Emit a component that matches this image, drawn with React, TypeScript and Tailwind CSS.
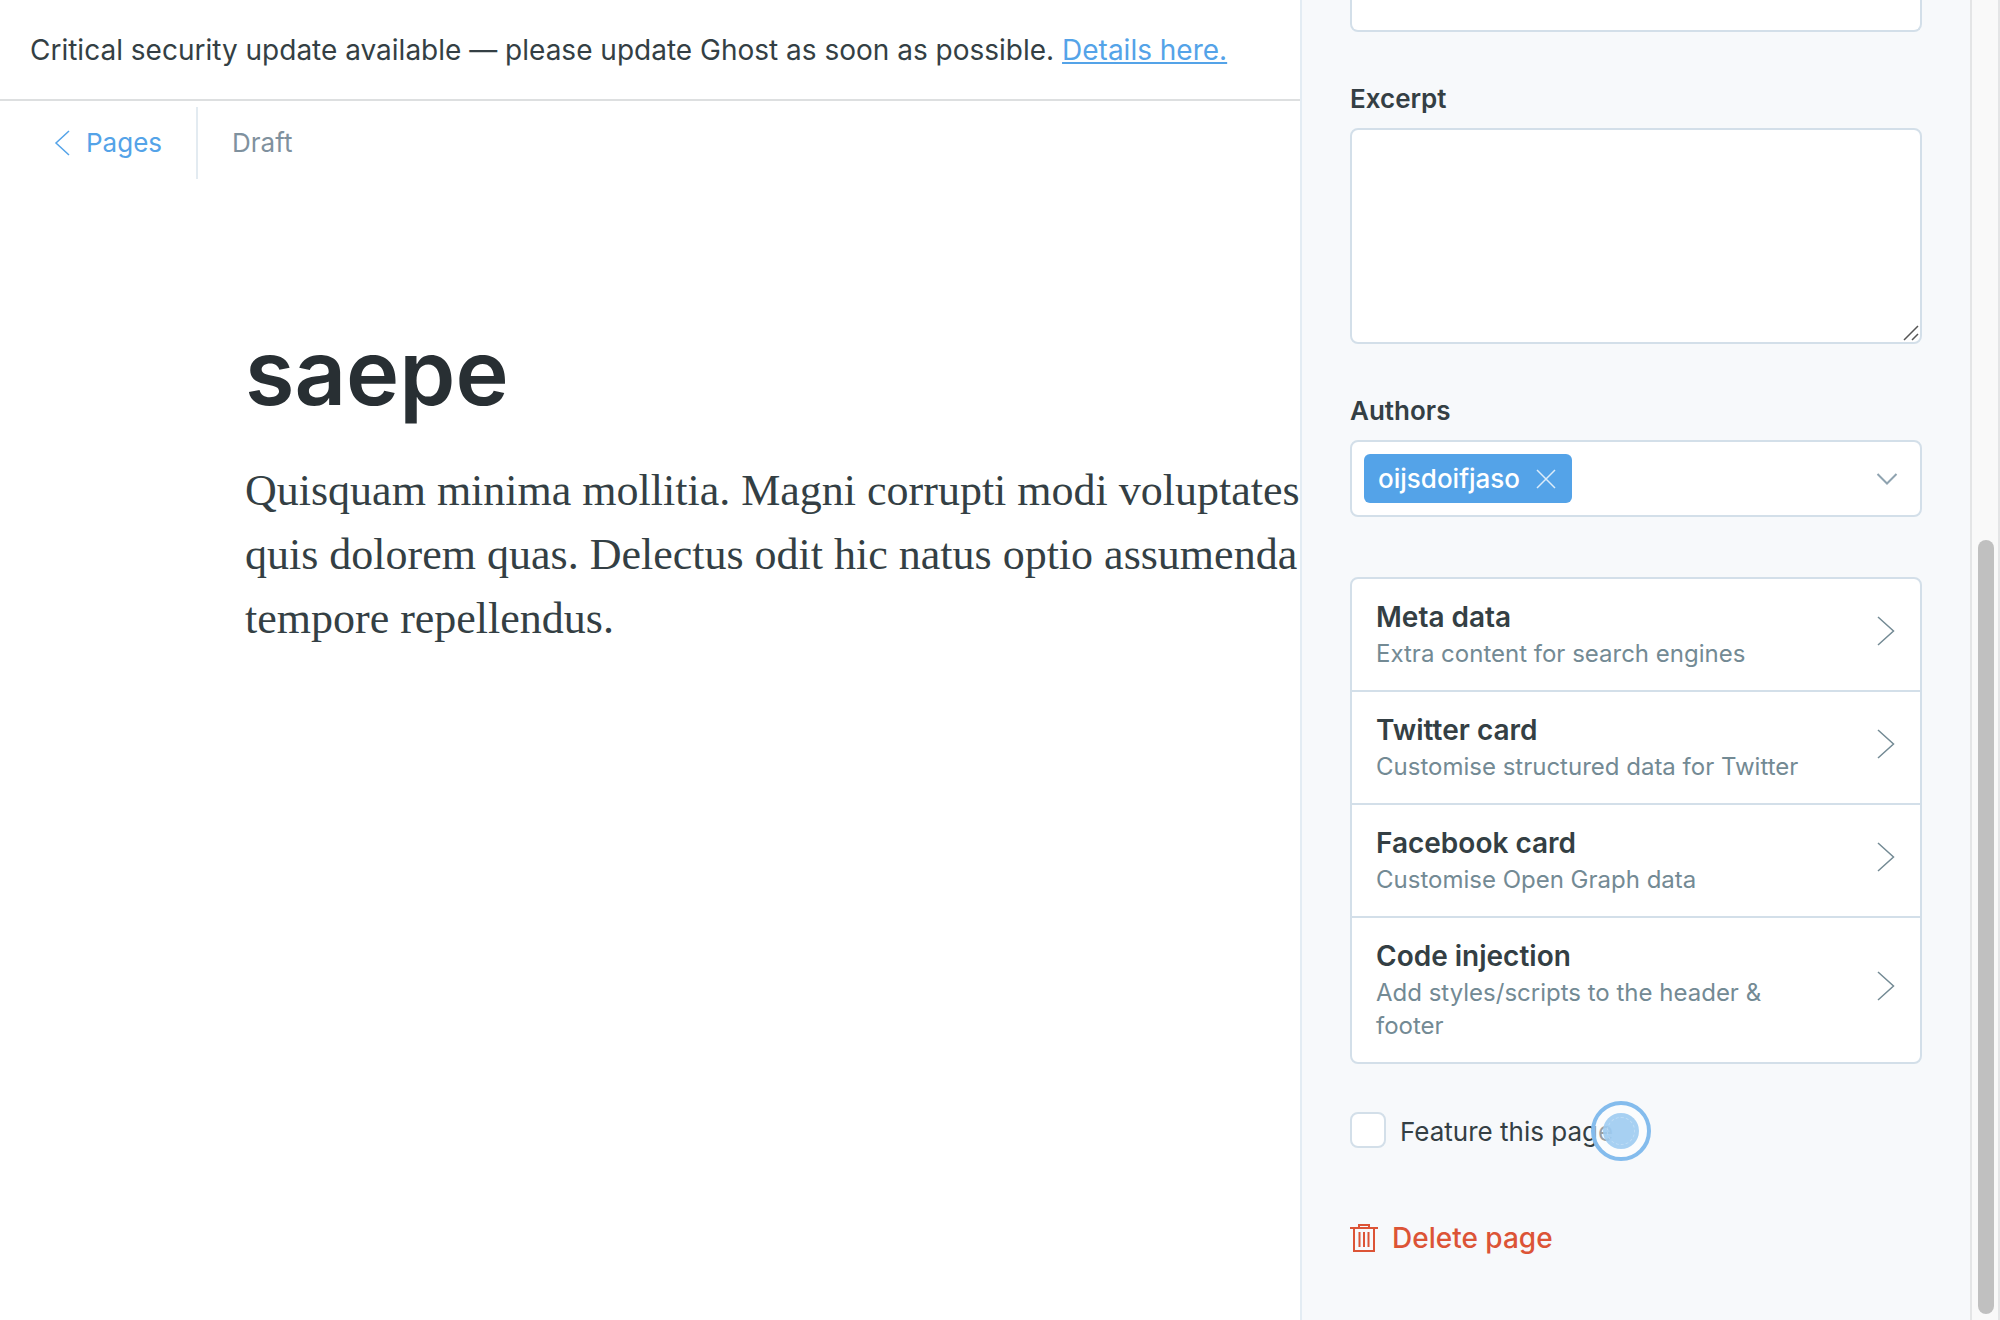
const cards = [
  { title: 'Meta data', text: 'Extra content for search engines' },
  { title: 'Twitter card', text: 'Customise structured data for Twitter' },
  { title: 'Facebook card', text: 'Customise Open Graph data' },
  { title: 'Code injection', text: 'Add styles/scripts to the header & footer' },
];

function TrashIcon() {
  return (
    <svg viewBox="0 0 28 28" className="h-7 w-7 shrink-0" fill="none" stroke="currentColor" strokeWidth="2" aria-hidden="true">
      <path d="M0 4h28M4 4v23h20V4M9 4V1h10v3" />
      <path d="M9.5 8v15M14 8v15M18.500 8v15" />
    </svg>
  );
}

function Editor() {
  return (
    <main className="min-w-0 flex-1 overflow-hidden bg-white whitespace-nowrap">
      <div className="flex h-[101px] items-center border-b-2 border-[#dddfe0] px-[30px] text-[28px] leading-9">
        <p>
          Critical security update available — please update Ghost as soon as possible.{' '}
          <a href="#details" className="text-[#54a3e8] underline decoration-2 underline-offset-2">
            Details here.
          </a>
        </p>
      </div>
      <header className="mt-1.5 flex h-18 items-center text-[26px] leading-9">
        <a href="#pages" className="flex h-full items-center border-r-2 border-[#e3ebf1] pr-[34px] pl-[54px] text-[#54a3e8]">
          <svg viewBox="0 0 16 26" className="mr-4 h-[26px] w-4" fill="none" stroke="currentColor" strokeWidth="1.5" aria-hidden="true">
            <path d="M15 1L2 13l13 12" />
          </svg>
          Pages
        </a>
        <span className="pl-[34px] text-[#7f919e]">Draft</span>
      </header>
      <article className="mt-[138px] pl-[245px]">
        <h1 className="text-[90px] leading-[112px] font-semibold text-[#282f33]">saepe</h1>
        <p className="mt-[30px] font-['Liberation_Serif',serif] text-[44px] leading-16">
          Quisquam minima mollitia. Magni corrupti modi voluptates
          <br />
          quis dolorem quas. Delectus odit hic natus optio assumenda
          <br />
          tempore repellendus.
        </p>
      </article>
    </main>
  );
}

function Settings() {
  return (
    <aside className="w-[670px] shrink-0 border-l-2 border-[#e3ecf3] bg-[#f7f9fb] pr-12 pl-12">
      <input aria-label="Page setting" className="block h-8 w-full rounded-b-lg border-2 border-t-0 border-[#d3dfe9] bg-white px-4" />

      <label htmlFor="excerpt" className="mt-12 block text-[26px] leading-[38px] font-semibold">
        Excerpt
      </label>
      <div className="relative mt-2.5">
        <textarea id="excerpt" className="block h-54 w-full resize-none rounded-lg border-2 border-[#d3dfe9] bg-white p-4" />
        <svg viewBox="0 0 16 16" className="pointer-events-none absolute right-[3px] bottom-[3px] h-4 w-4" stroke="#555" strokeWidth="1.500" aria-hidden="true">
          <path d="M1 15L15 1M9 15l6-6" />
        </svg>
      </div>

      <label htmlFor="authors" className="mt-12 block text-[26px] leading-[38px] font-semibold">
        Authors
      </label>
      <div className="mt-2.5 flex h-[77px] items-center rounded-lg border-2 border-[#d3dfe9] bg-white px-3">
        <span className="flex h-[49px] items-center rounded-md bg-[#54a3e8] pr-4 pl-[14px] text-[26px] leading-9 font-medium text-white">
          oijsdoifjaso
          <button type="button" aria-label="Remove oijsdoifjaso" className="ml-4">
            <svg viewBox="0 0 20 20" className="h-5 w-5 opacity-80" stroke="currentColor" strokeWidth="1.500" aria-hidden="true">
              <path d="M1 1l18 18M19 1L1 19" />
            </svg>
          </button>
        </span>
        <input id="authors" className="min-w-0 flex-1 bg-transparent px-2 text-[26px] outline-none" />
        <button type="button" aria-label="Show authors" className="mr-2.5">
          <svg viewBox="0 0 22 14" className="h-3.5 w-[22px]" fill="none" stroke="#8fa3b0" strokeWidth="2" aria-hidden="true">
            <path d="M1.500 2L11 11.500 20.500 2" />
          </svg>
        </button>
      </div>

      <ul className="mt-15 divide-y-2 divide-[#d3dfe9] rounded-lg border-2 border-[#d3dfe9] bg-white">
        {cards.map((card) => (
          <li key={card.title}>
            <button type="button" className="flex w-full items-center justify-between py-5 pr-[25px] pl-6 text-left">
              <span className="w-[440px]">
                <span className="block text-[28px] leading-9 font-semibold">{card.title}</span>
                <span className="mt-0.5 block text-2xl leading-[33px] text-[#738a94]">{card.text}</span>
              </span>
              <svg viewBox="0 0 18 30" className="mb-2 h-[30px] w-[18px]" fill="none" stroke="#738a94" strokeWidth="1.500" aria-hidden="true">
                <path d="M1 1l15.500 14L1 29" />
              </svg>
            </button>
          </li>
        ))}
      </ul>

      <label className="relative mt-12 flex h-9 w-fit items-center text-[26px] leading-9">
        <input type="checkbox" className="mr-[14px] h-9 w-9 appearance-none rounded-lg border-2 border-[#d3dfe9] bg-white" />
        <span className="pt-1">Feature this page</span>
        <span className="absolute top-[-11px] left-[241px] flex h-15 w-15 items-center justify-center rounded-full border-4 border-[#84bced] bg-white/50">
          <span className="flex h-9 w-9 items-center justify-center rounded-full bg-[#9dcbf1]/90">
            <span className="h-7 w-7 rounded-full border border-dashed border-white/25" />
          </span>
        </span>
      </label>

      <button type="button" className="mt-18 flex items-center text-[28px] leading-9 font-medium text-[#dc5436]">
        <TrashIcon />
        <span className="ml-[14px]">Delete page</span>
      </button>
    </aside>
  );
}

export default function App() {
  return (
    <div className="flex min-h-screen bg-white font-['Inter',sans-serif] text-[#343f44]">
      <Editor />
      <Settings />
      <div className="flex w-[30px] shrink-0 flex-col border-x-2 border-[#e4e5e6] bg-[#f9f9f9] px-1.5 pt-[540px] pb-1.5">
        <div className="w-4 flex-1 rounded-full bg-[#c0c0c0]" />
      </div>
    </div>
  );
}
